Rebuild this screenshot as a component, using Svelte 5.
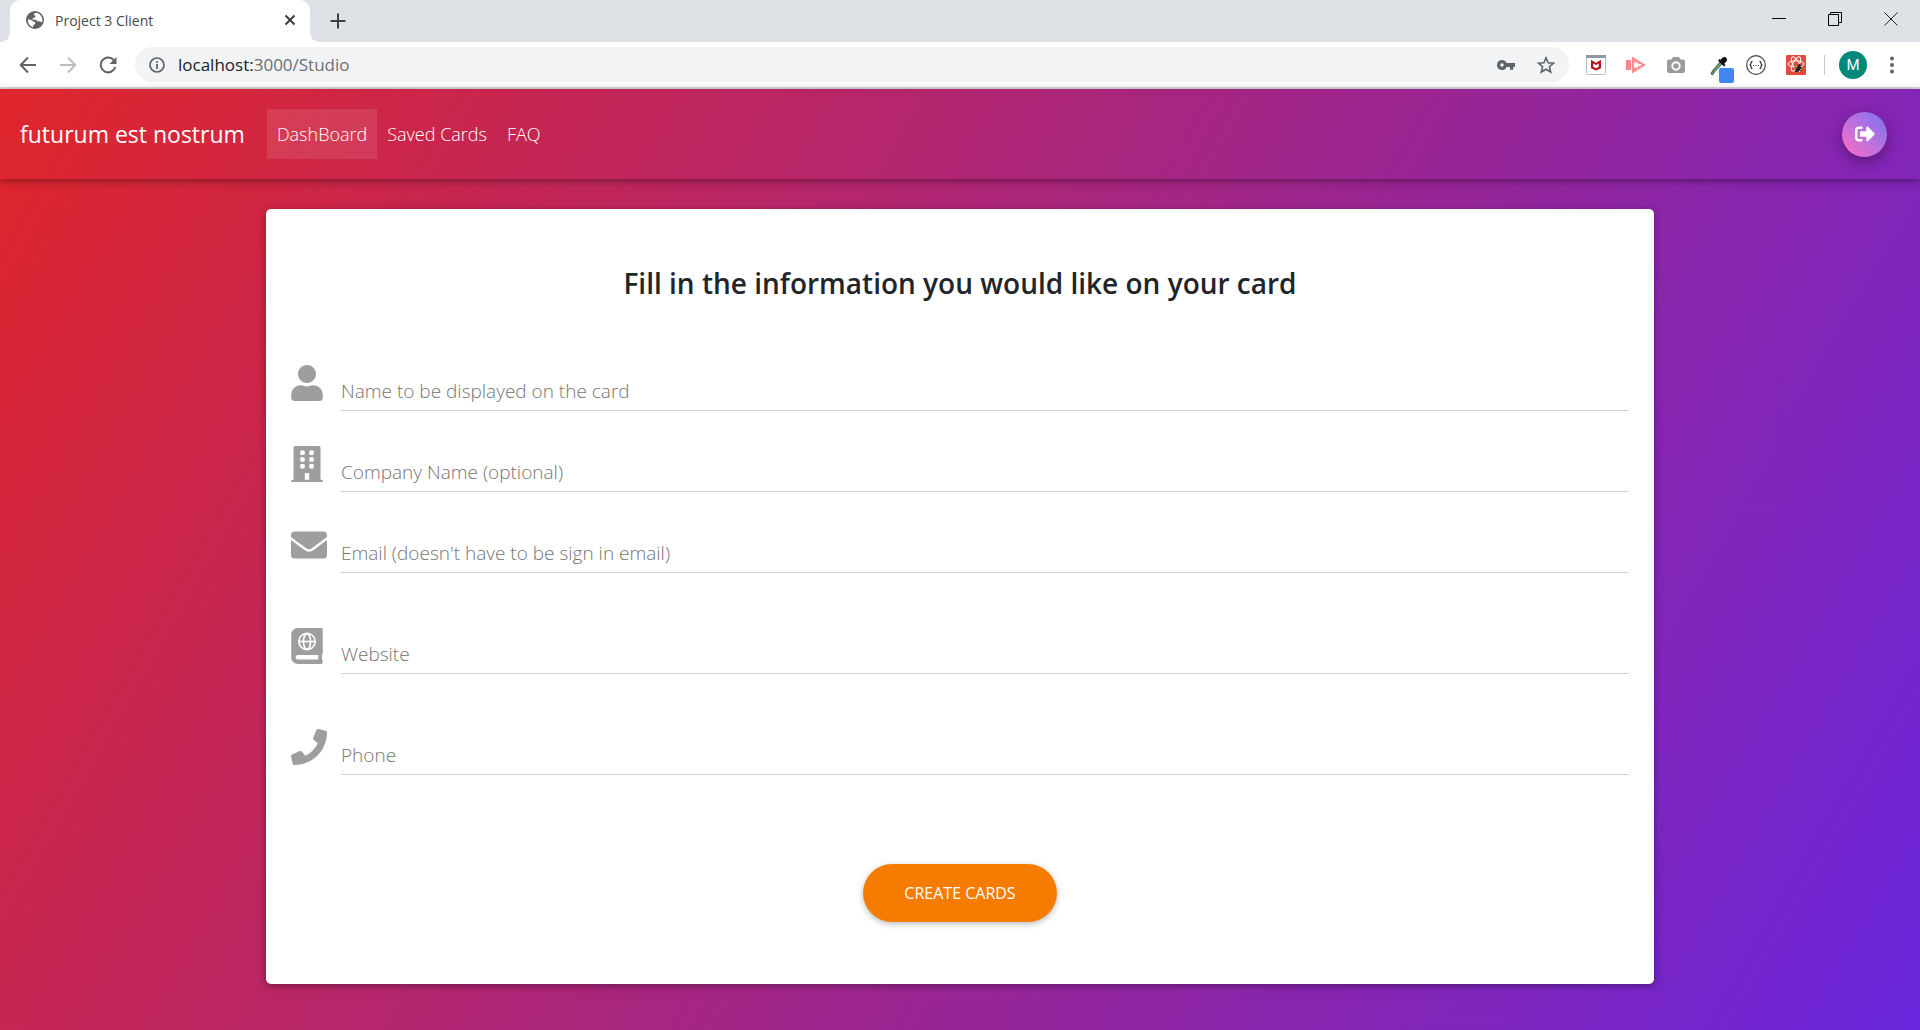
<script>
  const fields = [
    { id: 'name', label: 'Name to be displayed on the card', type: 'text', w: 448, d: 'M224 256c70.7 0 128-57.3 128-128S294.700 0 224 0 96 57.300 96 128s57.300 128 128 128zm89.600 32h-16.700c-22.200 10.200-46.900 16-72.900 16s-50.600-5.800-72.900-16h-16.700C60.200 288 0 348.200 0 422.400V464c0 26.500 21.500 48 48 48h352c26.500 0 48-21.500 48-48v-41.600c0-74.200-60.200-134.400-134.400-134.400z' },
    { id: 'company', label: 'Company Name (optional)', type: 'text', w: 448, d: 'M436 480h-20V24c0-13.255-10.745-24-24-24H56C42.745 0 32 10.745 32 24v456H12c-6.627 0-12 5.373-12 12v20h448v-20c0-6.627-5.373-12-12-12zM128 76c0-6.627 5.373-12 12-12h40c6.627 0 12 5.373 12 12v40c0 6.627-5.373 12-12 12h-40c-6.627 0-12-5.373-12-12V76zm0 96c0-6.627 5.373-12 12-12h40c6.627 0 12 5.373 12 12v40c0 6.627-5.373 12-12 12h-40c-6.627 0-12-5.373-12-12v-40zm52 148h-40c-6.627 0-12-5.373-12-12v-40c0-6.627 5.373-12 12-12h40c6.627 0 12 5.373 12 12v40c0 6.627-5.373 12-12 12zm76 160h-64v-84c0-6.627 5.373-12 12-12h40c6.627 0 12 5.373 12 12v84zm64-172c0 6.627-5.373 12-12 12h-40c-6.627 0-12-5.373-12-12v-40c0-6.627 5.373-12 12-12h40c6.627 0 12 5.373 12 12v40zm0-96c0 6.627-5.373 12-12 12h-40c-6.627 0-12-5.373-12-12v-40c0-6.627 5.373-12 12-12h40c6.627 0 12 5.373 12 12v40zm0-96c0 6.627-5.373 12-12 12h-40c-6.627 0-12-5.373-12-12V76c0-6.627 5.373-12 12-12h40c6.627 0 12 5.373 12 12v40z' },
    { id: 'email', label: "Email (doesn't have to be sign in email)", type: 'email', w: 512, d: 'M502.300 190.800c3.900-3.100 9.700-.2 9.700 4.700V400c0 26.500-21.500 48-48 48H48c-26.500 0-48-21.500-48-48V195.600c0-5 5.700-7.800 9.700-4.700 22.400 17.400 52.100 39.500 154.100 113.600 21.100 15.400 56.700 47.800 92.200 47.600 35.700.3 72-32.800 92.300-47.600 102-74.100 131.600-96.300 154-113.700zM256 320c23.200.4 56.600-29.200 73.400-41.400 132.700-96.300 142.800-104.700 173.400-128.700 5.800-4.500 9.200-11.500 9.200-18.900v-19c0-26.500-21.500-48-48-48H48c-26.500 0-48 21.500-48 48v19c0 7.400 3.400 14.300 9.200 18.900 30.600 23.900 40.700 32.400 173.400 128.700 16.800 12.200 50.200 41.800 73.400 41.400z' },
    { id: 'website', label: 'Website', type: 'url', w: 448, tall: true, globe: true, d: 'M448 358.400V25.600c0-16-9.600-25.600-25.600-25.600H96C41.600 0 0 41.600 0 96v320c0 54.400 41.600 96 96 96h326.400c12.800 0 25.600-9.600 25.600-25.600v-16c0-6.400-3.200-12.800-9.600-19.200-3.200-16-3.200-60.800 0-73.600 6.400-3.200 9.600-9.600 9.600-19.200zM96 384h288v64H96c-44 0-44-64 0-64z' },
    { id: 'phone', label: 'Phone', type: 'tel', w: 512, tall: true, d: 'M493.400 24.600l-104-24c-11.300-2.600-22.900 3.300-27.500 13.900l-48 112c-4.200 9.800-1.400 21.300 6.900 28l60.600 49.600c-36 76.700-98.900 140.500-177.200 177.200l-49.600-60.600c-6.800-8.300-18.200-11.100-28-6.900l-112 48C3.900 366.500-2 378.100.6 389.400l24 104C27.100 504.200 36.700 512 48 512c256.100 0 464-207.500 464-464 0-11.200-7.700-20.900-18.600-23.400z' }
  ];
  const links = ['DashBoard', 'Saved Cards', 'FAQ'];
</script>

<svelte:head><title>Project 3 Client</title></svelte:head>

<div class="window">
  <div class="tabstrip">
    <div class="tab">
      <svg class="i18" viewBox="0 0 18 18"><circle cx="9" cy="9" r="9" fill="#5f6368"/><path d="M10.500 1.800c-2 .3-3 1.200-2.700 2.300l1.700.7-.4 1.800-2.200.4-.5 1.500 3.600.2 1.500 1.800 2.500-.3 1.800 1.400a7.200 7.200 0 0 0-5.300-9.800zM2 8.200l3.300.8 2 1.600 1.800.3.200 1.800-1.800 1.300-.5 2.200A7.200 7.200 0 0 1 2 8.200z" fill="#fff"/></svg>
      <span class="tabname">Project 3 Client</span>
      <button class="plain close" aria-label="Close tab"><svg class="i12" viewBox="0 0 12 12"><path d="M1.500 1.500l9 9m0-9l-9 9" stroke="#3c4043" stroke-width="2"/></svg></button>
    </div>
    <button class="plain newtab" aria-label="New tab"><svg class="i16" viewBox="0 0 16 16"><path d="M8 .5v15M.5 8h15" stroke="#3c4043" stroke-width="2"/></svg></button>
    <div class="controls">
      <button class="plain" aria-label="Minimize"><svg class="i14" viewBox="0 0 14 14"><path d="M0 6.500h14" stroke="#000"/></svg></button>
      <button class="plain" aria-label="Restore"><svg class="i14" viewBox="0 0 14 14"><path d="M.5 2.500h10v11H.5zM2.500 2.500v-2h11v10h-3" fill="none" stroke="#000"/></svg></button>
      <button class="plain" aria-label="Close window"><svg class="i14" viewBox="0 0 14 14"><path d="M.5 .5l13 13m0-13l-13 13" stroke="#222"/></svg></button>
    </div>
  </div>

  <div class="toolbar">
    <div class="history">
      <button class="plain" aria-label="Back"><svg class="i18" viewBox="0 0 18 18"><path d="M17 9H2m7-7.500L1.700 9 9 16.500" fill="none" stroke="#5f6368" stroke-width="2"/></svg></button>
      <button class="plain" aria-label="Forward"><svg class="i18" viewBox="0 0 18 18"><path d="M1 9h15M9 1.500L16.300 9 9 16.500" fill="none" stroke="#bdc0c3" stroke-width="2"/></svg></button>
      <button class="plain" aria-label="Reload"><svg class="i18" viewBox="0 0 18 18"><path d="M14.700 4A7.400 7.400 0 1 0 16.300 11" fill="none" stroke="#5f6368" stroke-width="2"/><path d="M17.500 1v7h-7z" fill="#5f6368"/></svg></button>
    </div>
    <div class="address">
      <svg class="i16" viewBox="0 0 16 16"><circle cx="8" cy="8" r="7" fill="none" stroke="#5f6368" stroke-width="1.700"/><path d="M8 7v5M8 4v1.800" stroke="#5f6368" stroke-width="1.800"/></svg>
      <span class="url">localhost:<span class="path">3000/Studio</span></span>
      <svg class="i18" viewBox="0 0 18 18"><path fill-rule="evenodd" d="M5 4a5 5 0 1 0 4.600 7H13v2.800h3.200V11H18V7H9.600A5 5 0 0 0 5 4zm0 3.200a1.800 1.800 0 1 1 0 3.600 1.800 1.800 0 0 1 0-3.600z" fill="#5f6368"/></svg>
      <svg class="i18 star" viewBox="0 0 18 18"><path d="M9 1.800l2.100 5 5.400.4-4.100 3.500 1.300 5.300L9 13.200 4.300 16l1.300-5.300-4.100-3.500 5.400-.4z" fill="none" stroke="#5f6368" stroke-width="1.600"/></svg>
    </div>
    <div class="extensions">
      <svg class="i20" viewBox="0 0 20 20"><rect x=".5" y=".5" width="19" height="19" rx="1" fill="#fff" stroke="#b9bcbe"/><path d="M0 0h20v3H0z" fill="#8a9ba8"/><path d="M5 5l3 1.500 2 1.500 2-1.500L15 5v8.200L10 15.500l-5-2.300z" fill="#b5121b"/><path d="M7.200 8.500L10 10l2.800-1.500v3.300L10 13.200l-2.800-1.400z" fill="#fff"/></svg>
      <svg class="i20" viewBox="0 0 20 20"><path d="M0 5h5v10H0z" fill="#f98585"/><path d="M6 1.500L20 10 6 18.500z" fill="#fa8f8f"/><path d="M8 7.500h4V9h3v2h-3v1.500H8z" fill="#fff"/><path d="M5 10l3-2v4z" fill="#fa8f8f"/></svg>
      <svg class="i20" viewBox="0 0 20 20"><path d="M7 2h6l1.500 2.500H17a2 2 0 0 1 2 2V16a2 2 0 0 1-2 2H3a2 2 0 0 1-2-2V6.500a2 2 0 0 1 2-2h2.500z" fill="#9b9b9b"/><circle cx="10" cy="11" r="3.700" fill="#9b9b9b" stroke="#fff" stroke-width="2"/></svg>
      <svg class="dropper" viewBox="0 0 24 27"><path d="M1.500 18.500l-.5-1 2-3.500L10 6l2 2-7.500 8-2 3z" fill="#63a06a" stroke="#333" stroke-width=".8"/><path d="M8 4.500l6 6 1.500-1.500-1.200-1.200 2.200-2.500c2-2.500-1.500-5.800-4-3.500l-2 2L9.500 3z" fill="#111"/><rect x="9" y="12" width="15" height="15" rx="2" fill="#4285f4"/></svg>
      <svg class="i20 braces" viewBox="0 0 20 20"><circle cx="10" cy="10" r="9.300" fill="#fff" stroke="#444" stroke-width="1.200"/><path d="M6.500 6.500Q5 6.500 5 8T3.800 10Q5 10 5 12t1.500 1.500M13.500 6.500Q15 6.500 15 8t1.200 2Q15 10 15 12t-1.500 1.500" fill="none" stroke="#333" stroke-width="1.300"/><path d="M7 10.500h1m1.500 0h1m1.500 0h1" stroke="#555"/></svg>
      <svg class="i20" viewBox="0 0 20 20"><rect width="20" height="20" rx="1" fill="#e04b3c"/><g fill="none" stroke="#fff"><ellipse cx="10" cy="9" rx="8" ry="3.200"/><ellipse cx="10" cy="9" rx="8" ry="3.200" transform="rotate(60 10 9)"/><ellipse cx="10" cy="9" rx="8" ry="3.200" transform="rotate(120 10 9)"/></g><ellipse cx="12" cy="14" rx="2" ry="3.200" fill="#222" transform="rotate(25 12 14)"/><circle cx="13.500" cy="10.500" r="1.600" fill="#222"/><path d="M8 12l8 4M9 17l6-5M9 15l7-2" stroke="#222"/></svg>
      <span class="divider"></span>
      <button class="avatar" aria-label="Profile">M</button>
      <button class="plain" aria-label="Menu"><svg class="dots" viewBox="0 0 4 18"><circle cx="2" cy="2.500" r="2"/><circle cx="2" cy="9" r="2"/><circle cx="2" cy="15.500" r="2"/></svg></button>
    </div>
  </div>

  <div class="page">
    <nav>
      <a class="brand" href="#home">futurum est nostrum</a>
      <ul>
        {#each links as link, i}
          <li class:active={i === 0}><a href="#{link}">{link}</a></li>
        {/each}
      </ul>
      <button class="logout" aria-label="Log out">
        <svg viewBox="0 0 512 512"><path fill="#fff" d="M497 273L329 441c-15 15-41 4.500-41-17v-96H152c-13.300 0-24-10.700-24-24v-96c0-13.300 10.700-24 24-24h136V88c0-21.400 25.900-32 41-17l168 168c9.300 9.400 9.300 24.600 0 34zM192 436v-40c0-6.600-5.400-12-12-12H96c-17.700 0-32-14.300-32-32V160c0-17.700 14.300-32 32-32h84c6.600 0 12-5.400 12-12V76c0-6.600-5.400-12-12-12H96c-53 0-96 43-96 96v192c0 53 43 96 96 96h84c6.600 0 12-5.400 12-12z"/></svg>
      </button>
    </nav>

    <main>
      <form>
        <h1>Fill in the information you would like on your card</h1>
        {#each fields as f}
          <div class="field" class:tall={f.tall}>
            <label for={f.id} aria-label={f.label}>
              <svg viewBox="0 0 {f.w} 512" class:wide={f.w === 512}>
                <path fill-rule="evenodd" d={f.d}/>
                {#if f.globe}
                  <g fill="none" stroke="#fff" stroke-width="24">
                    <circle cx="224" cy="192" r="116"/>
                    <ellipse cx="224" cy="192" rx="50" ry="112"/>
                    <path d="M108 192h232"/>
                  </g>
                {/if}
              </svg>
            </label>
            <input id={f.id} type={f.type} placeholder={f.label} />
          </div>
        {/each}
        <button class="create" type="button">CREATE CARDS</button>
      </form>
    </main>
  </div>
</div>

<style>
  :global(body) { margin: 0; }
  .window {
    min-height: 100vh;
    display: flex;
    flex-direction: column;
    font-family: "Segoe UI", "Open Sans", "Noto Sans", sans-serif;
    font-weight: 300;
  }
  .window *, .window { box-sizing: border-box; }
  svg { display: block; flex: none; }
  .i12 { width: 12px; height: 12px; }
  .i14 { width: 14px; height: 14px; }
  .i16 { width: 16px; height: 16px; }
  .i18 { width: 18px; height: 18px; }
  .i20 { width: 20px; height: 20px; }
  button { font: inherit; border: 0; cursor: pointer; }
  .plain { background: none; padding: 0; }

  .tabstrip { display: flex; height: 42px; background: #dee1e6; padding-left: 10px; }
  .tab {
    position: relative;
    display: flex; align-items: center; width: 300px; padding: 0 14px 2px 16px;
    background: #fff; border-radius: 10px 10px 0 0;
  }
  .tab::before, .tab::after {
    content: ""; position: absolute; bottom: 0; width: 10px; height: 10px;
  }
  .tab::before { right: 100%; background: radial-gradient(circle at 0 0, #dee1e6 10px, #fff 10px); }
  .tab::after { left: 100%; background: radial-gradient(circle at 100% 0, #dee1e6 10px, #fff 10px); }
  .tabname { flex: 1; margin-left: 11px; font-size: 14px; font-weight: 400; color: #45494d; }
  .newtab { margin-left: 20px; }
  .controls { display: flex; align-items: center; gap: 42px; margin-left: auto; padding: 0 22px 5px 0; }

  .toolbar {
    display: flex; align-items: center; height: 47px; padding: 0 26px 0 19px;
    background: #fff; border-bottom: 2px solid #d9dbdf;
  }
  .history { display: flex; gap: 22px; }
  .address {
    flex: 1; display: flex; align-items: center; height: 35px; margin-left: 18px;
    padding: 0 14px; border-radius: 18px; background: #f1f3f4;
  }
  .url { flex: 1; margin-left: 13px; font-size: 17px; font-weight: 400; color: #202124; }
  .path { color: #6b6f73; }
  .star { margin-left: 22px; }
  .extensions { display: flex; align-items: center; gap: 20px; margin-left: 17px; }
  .dropper { width: 24px; height: 27px; margin: 9px 0 0 4px; }
  .braces { margin-left: -8px; }
  .divider { width: 1px; height: 20px; background: #c8cacd; margin: 0 -6px 0 -2px; }
  .avatar { width: 28px; height: 28px; margin-right: 3px; border-radius: 50%; padding: 0; background: #00897b; color: #fff; font: 400 15px Roboto, sans-serif; }
  .dots { width: 4px; height: 18px; fill: #5f6368; }

  .page {
    flex: 1; display: flex; flex-direction: column;
    background: linear-gradient(120deg, #e0262b, #6925dc);
  }
  nav { display: flex; align-items: center; height: 90px; padding: 0 33px 0 20px; box-shadow: 0 2px 5px rgba(0,0,0,.16), 0 2px 10px rgba(0,0,0,.25); }
  a { color: #fff; text-decoration: none; }
  .brand { font-size: 23px; font-weight: 400; }
  ul { display: flex; list-style: none; margin: 0 0 0 22px; padding: 0; }
  li a { display: block; padding: 0 10px; font-size: 18px; line-height: 50px; }
  .active a { background: rgba(255,255,255,.1); }
  .logout {
    display: grid; place-items: center; width: 45px; height: 45px; margin-left: auto; padding: 0;
    border-radius: 50%; background: linear-gradient(45deg, #ff6ec4, #7873f5);
    box-shadow: 0 5px 11px rgba(0,0,0,.18), 0 4px 15px rgba(0,0,0,.15);
  }
  .logout svg { width: 20px; height: 20px; }

  main { padding: 30px 0 46px; }
  form {
    display: flex; flex-direction: column; width: calc(75% - 52px); margin: 0 auto;
    padding: 49px 25px 62px; background: #fff; border-radius: 5px;
    box-shadow: 0 2px 5px rgba(0,0,0,.16), 0 2px 10px rgba(0,0,0,.2);
  }
  h1 { margin: 0 0 42px; text-align: center; font-size: 28px; line-height: 50px; font-weight: 600; color: #212529; }
  .field { display: flex; height: 61px; margin-bottom: 20px; padding-top: 15px; }
  .field.tall { margin: 20px 0; }
  .field label { width: 50px; }
  .field svg { width: 32px; height: 36px; fill: #9e9e9e; }
  .field svg.wide { width: 36px; }
  input {
    flex: 1; min-width: 0; padding: 6px 0 0; border: 0; border-bottom: 1px solid #ced4da;
    background: none; outline: 0; font: inherit; font-size: 19px; color: #495057;
  }
  input::placeholder { color: #757575; opacity: 1; }
  .create {
    align-self: center; width: 194px; height: 58px; margin-top: 69px; border-radius: 29px;
    background: #f57c00; color: #fff; font-size: 16px; font-weight: 400;
    box-shadow: 0 2px 5px rgba(0,0,0,.16), 0 2px 10px rgba(0,0,0,.12);
  }
</style>
